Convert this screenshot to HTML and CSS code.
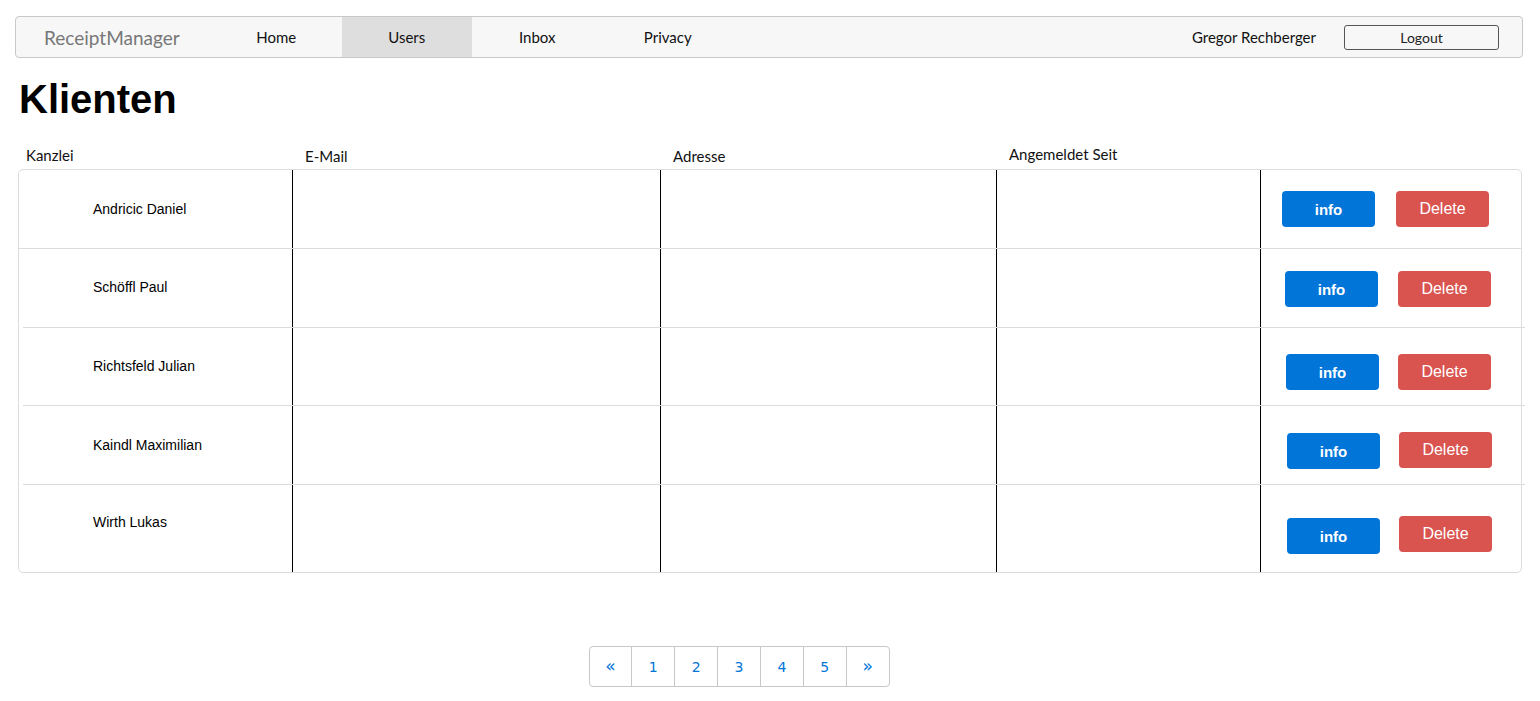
FILE: index.html
```html
<!DOCTYPE html>
<html lang="de">
<head>
<meta charset="utf-8">
<title>ReceiptManager</title>
<link rel="stylesheet" href="styles.css">
</head>
<body>
<nav class="navbar">
  <a class="brand" href="#">ReceiptManager</a>
  <ul class="nav">
    <li><a href="#">Home</a></li>
    <li class="active"><a href="#">Users</a></li>
    <li><a href="#">Inbox</a></li>
    <li><a href="#">Privacy</a></li>
  </ul>
  <div class="user">
    <span class="username">Gregor Rechberger</span>
    <button class="logout">Logout</button>
  </div>
</nav>
<main class="content">
  <h1 class="title">Klienten</h1>
  <div class="thead">
    <div class="th th-first">Kanzlei</div>
    <div class="th">E-Mail</div>
    <div class="th">Adresse</div>
    <div class="th th-up">Angemeldet Seit</div>
    <div class="th"></div>
  </div>
  <div class="tbody">
    <div class="row r1">
      <div class="cell name">Andricic Daniel</div>
      <div class="cell"></div>
      <div class="cell"></div>
      <div class="cell"></div>
      <div class="cell actions"><button class="btn info">info</button><button class="btn del">Delete</button></div>
    </div>
    <div class="row r2">
      <div class="cell name">Schöffl Paul</div>
      <div class="cell"></div>
      <div class="cell"></div>
      <div class="cell"></div>
      <div class="cell actions a2"><button class="btn info">info</button><button class="btn del">Delete</button></div>
    </div>
    <div class="sep"></div>
    <div class="row r3">
      <div class="cell name">Richtsfeld Julian</div>
      <div class="cell"></div>
      <div class="cell"></div>
      <div class="cell"></div>
      <div class="cell actions a3"><button class="btn info">info</button><button class="btn del">Delete</button></div>
    </div>
    <div class="sep"></div>
    <div class="row r4">
      <div class="cell name">Kaindl Maximilian</div>
      <div class="cell"></div>
      <div class="cell"></div>
      <div class="cell"></div>
      <div class="cell actions a4"><button class="btn info">info</button><button class="btn del">Delete</button></div>
    </div>
    <div class="sep"></div>
    <div class="row last">
      <div class="cell name">Wirth Lukas</div>
      <div class="cell"></div>
      <div class="cell"></div>
      <div class="cell"></div>
      <div class="cell actions a5"><button class="btn info">info</button><button class="btn del">Delete</button></div>
    </div>
  </div>
  <ul class="pagination">
    <li><a href="#">«</a></li>
    <li><a href="#">1</a></li>
    <li><a href="#">2</a></li>
    <li><a href="#">3</a></li>
    <li><a href="#">4</a></li>
    <li><a href="#">5</a></li>
    <li><a href="#">»</a></li>
  </ul>
</main>
</body>
</html>
```
FILE: styles.css
```css
* { box-sizing: border-box; }
body {
  margin: 0;
  padding: 16px 17px 0 15px;
  font-family: "Lato", "Liberation Sans", sans-serif;
  color: #000;
  background: #fff;
}
a { text-decoration: none; color: inherit; }
ul { list-style: none; margin: 0; padding: 0; }

.navbar {
  display: flex;
  align-items: center;
  height: 42px;
  border: 1px solid #c8c8c8;
  border-radius: 4px;
  background: #f7f7f7;
}
.brand {
  font-size: 19px;
  color: #777;
  margin-left: 28px;
  width: 167px;
}
.nav { display: flex; height: 100%; }
.nav li { width: 130.5px; display: flex; }
.nav a {
  flex: 1;
  display: flex;
  align-items: center;
  justify-content: center;
  font-size: 15px;
  color: #111;
}
.nav .active { background: #dedede; }
.user {
  margin-left: auto;
  display: flex;
  align-items: center;
  margin-right: 23px;
}
.username { font-size: 15px; color: #111; margin-right: 28px; }
.logout {
  width: 155px;
  height: 25px;
  border: 1px solid #555;
  border-radius: 3px;
  background: #f7f7f7;
  font-family: inherit;
  font-size: 14px;
  color: #222;
  padding: 0;
}

.content { padding: 0 1px 0 3px; }
.title {
  font-family: "Liberation Sans", Arial, sans-serif;
  font-size: 40px;
  font-weight: bold;
  margin: 18px 0 0 1px;
  line-height: 46px;
}
.thead {
  display: grid;
  grid-template-columns: 274px 368px 336px 264px 1fr;
  margin-top: 19px;
  height: 28px;
}
.th {
  font-size: 15px;
  color: #111;
  padding-left: 13px;
  padding-top: 6px;
}
.th-first { padding-left: 8px; padding-top: 5px; }
.th-up { padding-top: 4px; }

.tbody {
  border: 1px solid #dcdcdc;
  border-radius: 5px;
}
.row {
  display: grid;
  grid-template-columns: 273px 368px 336px 264px 1fr;
  height: 78px;
}
.row.r1 { border-bottom: 1px solid #dcdcdc; height: 79px; }
.row.r3 { height: 77px; }
.row.last { height: 87px; }
.sep {
  height: 1px;
  background: #dcdcdc;
  margin: 0 -4px 0 4px;
}
.cell { border-left: 1px solid #000; }
.cell.name {
  border-left: none;
  font-family: "Liberation Sans", Arial, sans-serif;
  font-size: 14px;
  padding-left: 74px;
  display: flex;
  align-items: center;
}
.r2 .name { padding-bottom: 2px; }
.r3 .name { padding-bottom: 1px; }
.row.last .name { padding-bottom: 13px; }
.actions {
  display: flex;
  align-items: center;
  gap: 21px;
  padding-left: 21px;
}
.a2 { padding-left: 24px; padding-top: 2px; gap: 20px; }
.a3 { padding-left: 25px; padding-top: 11px; gap: 19px; }
.a4 { padding-left: 26px; padding-top: 12px; gap: 19px; }
.a5 { padding-left: 26px; padding-top: 15px; gap: 19px; }
.btn {
  width: 93px;
  height: 36px;
  border: none;
  border-radius: 4px;
  color: #fff;
  font-family: "Liberation Sans", Arial, sans-serif;
  font-size: 15px;
  padding: 0;
}
.info { background: #0275d8; font-weight: bold; }
.del { background: #d9534f; font-size: 16px; }
.a5 .del { margin-top: -4px; }
.a4 .del { margin-top: -2px; }

.pagination {
  display: flex;
  width: 301px;
  margin: 73px auto 0;
  border: 1px solid #c8c8c8;
  border-radius: 4px;
  height: 41px;
  position: relative;
  left: -31px;
}
.pagination li {
  width: 43px;
  border-left: 1px solid #c8c8c8;
  display: flex;
}
.pagination li:first-child { border-left: none; width: 42px; }
.pagination a {
  flex: 1;
  display: flex;
  align-items: center;
  justify-content: center;
  font-family: "DejaVu Sans", Verdana, sans-serif;
  font-size: 14px;
  color: #0275d8;
}
.pagination li:first-child a, .pagination li:last-child a { font-size: 17px; padding-bottom: 2px; }
```
